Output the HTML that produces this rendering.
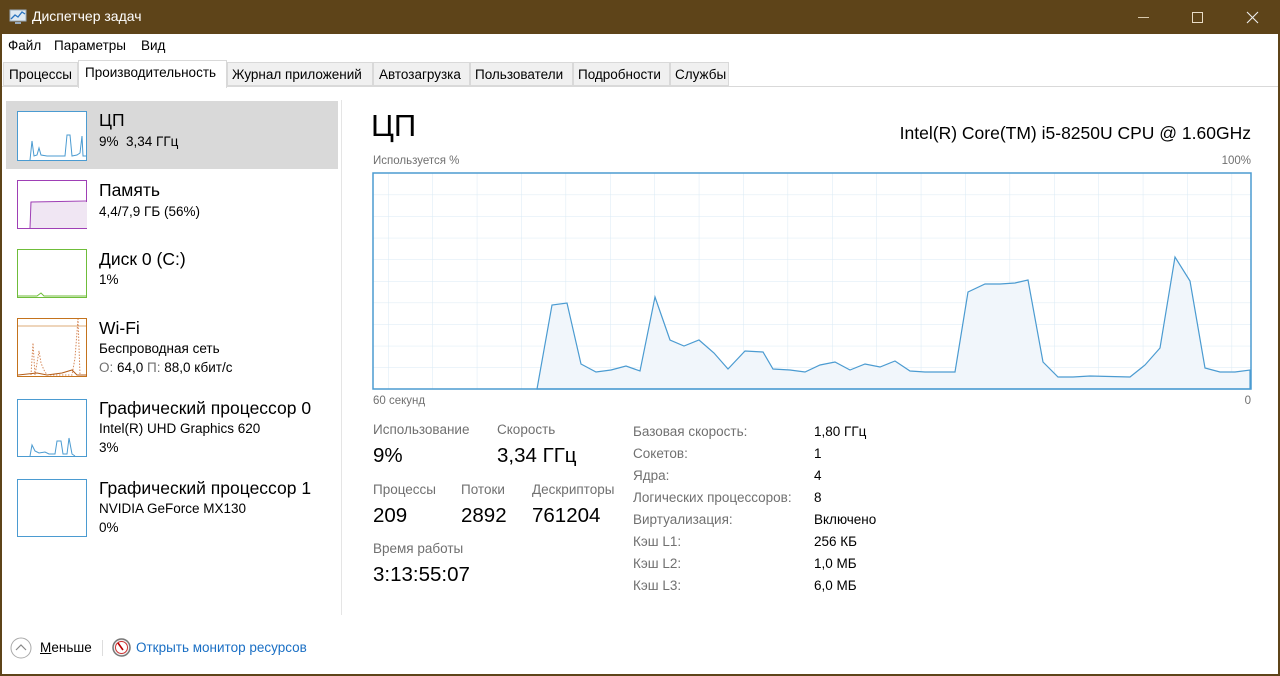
<!DOCTYPE html>
<html><head><meta charset="utf-8"><style>
*{margin:0;padding:0;box-sizing:border-box}
body{width:1280px;height:676px;overflow:hidden;background:#fff;font-family:"Segoe UI","Liberation Sans","DejaVu Sans",sans-serif;color:#000;position:relative}
.a{position:absolute;white-space:nowrap}
.g{color:#707070}
.t{font-size:13.5px}
.h{font-size:17.5px}
.v{font-size:20.5px}
</style></head><body>
<div class="a" style="left:0;top:0;width:1280px;height:676px;border:2px solid #5e4419;border-top:none"></div>
<div class="a" style="left:0;top:0;width:1280px;height:34px;background:#5e4419"></div>
<svg class="a" style="left:9px;top:9px" width="18" height="16"><rect x="1" y="1" width="16" height="11" fill="#dfe9f2" stroke="#9ab" /><polyline points="2,10 6,6 9,8 13,3 16,5" fill="none" stroke="#2a74c0" stroke-width="1.3"/><rect x="6" y="13" width="6" height="2" fill="#9ab"/></svg>
<div class="a" style="left:32px;top:8px;font-size:14px;color:#fff">Диспетчер задач</div>
<div class="a" style="left:1138px;top:17px;width:11px;height:1px;background:#d8c9ad"></div>
<div class="a" style="left:1192px;top:12px;width:11px;height:11px;border:1px solid #e8dcc6"></div>
<svg class="a" style="left:1246px;top:11px" width="13" height="13"><path d="M1 1L12 12M12 1L1 12" stroke="#eee" stroke-width="1.1"/></svg>
<div class="a t" style="left:8px;top:38px">Файл</div>
<div class="a t" style="left:54px;top:38px">Параметры</div>
<div class="a t" style="left:141px;top:38px">Вид</div>
<div class="a" style="left:2px;top:57px;width:1276px;height:30px;background:#fff;border-bottom:1px solid #d9d9d9"></div>
<div class="a t" style="left:3px;top:62px;height:24px;width:75px;background:#f0f0f0;border:1px solid #d9d9d9;padding:4px 5px">Процессы</div>
<div class="a t" style="left:78px;top:60px;height:28px;width:149px;background:#fff;border:1px solid #d9d9d9;border-bottom:none;padding:4px 6px">Производительность</div>
<div class="a t" style="left:227px;top:62px;height:24px;width:146px;background:#f0f0f0;border:1px solid #d9d9d9;padding:4px 4px">Журнал приложений</div>
<div class="a t" style="left:373px;top:62px;height:24px;width:97px;background:#f0f0f0;border:1px solid #d9d9d9;padding:4px 5px">Автозагрузка</div>
<div class="a t" style="left:470px;top:62px;height:24px;width:103px;background:#f0f0f0;border:1px solid #d9d9d9;padding:4px 4px">Пользователи</div>
<div class="a t" style="left:573px;top:62px;height:24px;width:97px;background:#f0f0f0;border:1px solid #d9d9d9;padding:4px 4px">Подробности</div>
<div class="a t" style="left:670px;top:62px;height:24px;width:59px;background:#f0f0f0;border:1px solid #d9d9d9;padding:4px 4px">Службы</div>

<div class="a" style="left:6px;top:101px;width:332px;height:68px;background:#d9d9d9"></div>
<div class="a" style="left:341px;top:100px;width:1px;height:515px;background:#e5e5e5"></div>

<svg class="a" style="left:17px;top:111px" width="70" height="50"><rect x="0.5" y="0.5" width="69" height="49" fill="#fff" stroke="#4b9bd1"/><polyline points="13,49 15,30 17,45 20,44 22,37 24,44 30,45 40,45 48,45 50,24 53,24 55,45 60,44 63,42 65,25 66,45 70,45" fill="none" stroke="#4b9bd1"/></svg>
<div class="a h" style="left:99px;top:110px">ЦП</div>
<div class="a t" style="left:99px;top:134px">9%&nbsp; 3,34 ГГц</div>

<svg class="a" style="left:17px;top:180px" width="70" height="49"><rect x="0.5" y="0.5" width="69" height="48" fill="#fff" stroke="#9f3fb5"/><path d="M13 48V22H70V48Z" fill="#f0e6f3"/><polyline points="13,48 14,22 70,21" fill="none" stroke="#9f3fb5"/></svg>
<div class="a h" style="left:99px;top:180px">Память</div>
<div class="a t" style="left:99px;top:204px">4,4/7,9 ГБ (56%)</div>

<svg class="a" style="left:17px;top:249px" width="70" height="49"><rect x="0.5" y="0.5" width="69" height="48" fill="#fff" stroke="#6fbd3a"/><polyline points="1,47 20,47 24,44 27,47 70,47" fill="none" stroke="#6fbd3a"/></svg>
<div class="a h" style="left:99px;top:249px">Диск 0 (C:)</div>
<div class="a t" style="left:99px;top:272px">1%</div>

<svg class="a" style="left:17px;top:318px" width="70" height="59"><rect x="0.5" y="0.5" width="69" height="58" fill="#fff" stroke="#c4731d"/><line x1="1" y1="8" x2="69" y2="8" stroke="#c4731d" stroke-opacity=".6"/><polyline points="14,57 16,25 18,57 22,33 24,45 27,52 30,57 55,57 58,40 61,1 63,57 70,57" fill="none" stroke="#d6895a" stroke-dasharray="1.5 1.5"/><polyline points="1,57 20,55 30,57 45,55 55,52 60,57 70,57" fill="none" stroke="#b55d18"/></svg>
<div class="a h" style="left:99px;top:318px">Wi-Fi</div>
<div class="a t" style="left:99px;top:341px">Беспроводная сеть</div>
<div class="a t" style="left:99px;top:360px"><span class="g">О:</span> 64,0 <span class="g">П:</span> 88,0 кбит/с</div>

<svg class="a" style="left:17px;top:399px" width="70" height="58"><rect x="0.5" y="0.5" width="69" height="57" fill="#fff" stroke="#4b9bd1"/><polyline points="13,57 15,46 18,52 22,54 28,53 32,55 38,55 40,42 44,42 46,55 50,55 52,39 55,55 58,57" fill="none" stroke="#4b9bd1"/></svg>
<div class="a h" style="left:99px;top:398px">Графический процессор 0</div>
<div class="a t" style="left:99px;top:421px">Intel(R) UHD Graphics 620</div>
<div class="a t" style="left:99px;top:440px">3%</div>

<svg class="a" style="left:17px;top:479px" width="70" height="58"><rect x="0.5" y="0.5" width="69" height="57" fill="#fff" stroke="#4b9bd1"/></svg>
<div class="a h" style="left:99px;top:478px">Графический процессор 1</div>
<div class="a t" style="left:99px;top:501px">NVIDIA GeForce MX130</div>
<div class="a t" style="left:99px;top:520px">0%</div>

<div class="a" style="left:371px;top:108px;font-size:31px">ЦП</div>
<div class="a h" style="right:29px;top:123px">Intel(R) Core(TM) i5-8250U CPU @ 1.60GHz</div>
<div class="a g" style="left:373px;top:155px;font-size:11.5px">Используется %</div>
<div class="a g" style="right:29px;top:155px;font-size:11.5px">100%</div>
<svg class="a" style="left:372px;top:172px" width="880" height="218">
<defs><pattern id="p" x="16" y="1" width="44.4" height="21.6" patternUnits="userSpaceOnUse"><path d="M0 0V21.6M0 0H44.4" stroke="#d9eaf4" fill="none"/></pattern></defs>
<rect x="1" y="1" width="878" height="216" fill="url(#p)"/>
<g transform="translate(-372,-172)">
<polygon points="537,389 552,305 567,303 581,364 596,372 611,370 626,366 640,371 655,297 670,340 684,346 699,340 714,353 728,369 745,351 763,352 773,369 790,370 805,372 820,365 835,362 850,370 865,364 880,367 895,361 910,371 925,372 955,372 968,292 985,284 1000,284 1015,283 1028,280 1043,362 1058,377 1073,377 1090,376 1130,377 1145,365 1160,348 1175,257 1190,281 1205,368 1220,372 1235,372 1250,370 1250,389" fill="#f1f6fb" stroke="#4b9bd1" stroke-width="1.2"/>
</g>
<rect x="1" y="1" width="878" height="216" fill="none" stroke="#4b9bd1" stroke-width="1.5"/>
</svg>
<div class="a g" style="left:373px;top:395px;font-size:11.5px">60 секунд</div>
<div class="a g" style="right:29px;top:395px;font-size:11.5px">0</div>

<div class="a g t" style="left:373px;top:422px">Использование</div>
<div class="a g t" style="left:497px;top:422px">Скорость</div>
<div class="a v" style="left:373px;top:444px">9%</div>
<div class="a v" style="left:497px;top:444px">3,34 ГГц</div>
<div class="a g t" style="left:373px;top:482px">Процессы</div>
<div class="a g t" style="left:461px;top:482px">Потоки</div>
<div class="a g t" style="left:532px;top:482px">Дескрипторы</div>
<div class="a v" style="left:373px;top:504px">209</div>
<div class="a v" style="left:461px;top:504px">2892</div>
<div class="a v" style="left:532px;top:504px">761204</div>
<div class="a g t" style="left:373px;top:541px">Время работы</div>
<div class="a v" style="left:373px;top:563px">3:13:55:07</div>

<div class="a g t" style="left:633px;top:421px;line-height:22px">Базовая скорость:<br>Сокетов:<br>Ядра:<br>Логических процессоров:<br>Виртуализация:<br>Кэш L1:<br>Кэш L2:<br>Кэш L3:</div>
<div class="a t" style="left:814px;top:421px;line-height:22px">1,80 ГГц<br>1<br>4<br>8<br>Включено<br>256 КБ<br>1,0 МБ<br>6,0 МБ</div>

<svg class="a" style="left:10px;top:637px" width="22" height="22"><circle cx="11" cy="11" r="10" fill="#fff" stroke="#aaa"/><path d="M6 13L11 8L16 13" fill="none" stroke="#888" stroke-width="1.2"/></svg>
<div class="a t" style="left:40px;top:640px"><u>М</u>еньше</div>
<div class="a" style="left:102px;top:640px;width:1px;height:16px;background:#ddd"></div>
<svg class="a" style="left:112px;top:638px" width="19" height="19"><circle cx="9.5" cy="9.5" r="8.5" fill="#eee" stroke="#777" stroke-width="1.5"/><circle cx="9.5" cy="9.5" r="6" fill="#fff" stroke="#c33"/><path d="M6 5L11 12" stroke="#b00" stroke-width="1.6"/></svg>
<div class="a t" style="left:136px;top:640px;color:#1a6fc4">Открыть монитор ресурсов</div>
</body></html>
